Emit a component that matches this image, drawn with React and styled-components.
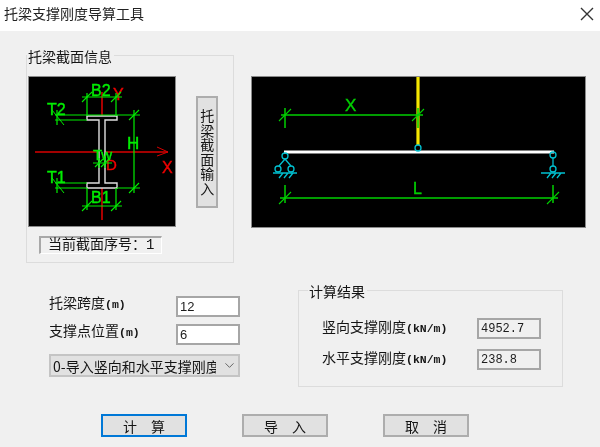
import React from "react";
import styled, { createGlobalStyle } from "styled-components";
import { ChevronDown } from "lucide-react";

const Global = createGlobalStyle`
  html, body { margin: 0; padding: 0; background: #f0f0f0; }
  * { box-sizing: border-box; }
`;

const cjk = `"Noto Sans CJK SC", "Liberation Sans", sans-serif`;
const monoCjk = `"Liberation Mono", "Noto Sans CJK SC", monospace`;

const Window = styled.div`
  width: 600px;
  height: 447px;
  overflow: hidden;
  background: #f0f0f0;
  color: #141414;
  font-family: ${cjk};
  font-size: 14px;
  line-height: 18px;
  filter: blur(0.3px);
`;
const TitleBar = styled.header`
  height: 31px;
  background: #fff;
  display: flex;
  align-items: center;
  justify-content: space-between;
  padding: 0 6px 5px 4px;
  color: #222;
`;
const CloseIcon = styled.svg`
  width: 14px;
  height: 14px;
  margin-top: 2px;
  stroke: #333;
  stroke-width: 1.4;
`;
const Body = styled.main`
  padding: 24px 14px 0 26px;
`;
const TopRow = styled.section`
  display: flex;
  gap: 17px;
  height: 208px;
`;
const Group = styled.div`
  position: relative;
  flex: none;
  border: 1px solid #dcdcdc;
  width: ${(p) => p.$w}px;
  height: ${(p) => p.$h}px;
`;
const Legend = styled.span`
  position: absolute;
  top: -9px;
  left: ${(p) => p.$x}px;
  padding: 0 2px 0 1px;
  background: #f0f0f0;
  white-space: nowrap;
`;
const SectionLayout = styled.div`
  display: grid;
  grid-template-columns: 148px 22px;
  column-gap: 20px;
  padding: 20px 0 0 1px;
  align-items: start;
`;
const CadPanel = styled.div`
  background: #000;
  border: 1px solid #8a8a8a;
  height: ${(p) => p.$h}px;
  width: ${(p) => p.$w}px;
  margin-top: ${(p) => p.$top || 0}px;
  flex: none;
  overflow: hidden;
`;
const CadSvg = styled.svg`
  display: block;
  width: 100%;
  height: 100%;
`;
const VerticalButton = styled.button`
  margin-top: 20px;
  width: 22px;
  height: 112px;
  padding: 0;
  border: 2px solid #adadad;
  background: #e1e1e1;
  color: #141414;
  font: inherit;
  line-height: 14.5px;
  writing-mode: vertical-rl;
  text-orientation: upright;
  letter-spacing: 0.5px;
  display: flex;
  align-items: center;
  justify-content: center;
`;
const SectionNo = styled.div`
  margin: 9px 0 0 12px;
  width: 123px;
  height: 18px;
  border-style: solid;
  border-width: 2px 1px 1px 2px;
  border-color: #a8a8a8 #fff #fff #a8a8a8;
  padding-left: 7px;
  line-height: 15px;
  white-space: nowrap;
  font-family: ${monoCjk};
`;
const Unit = styled.span`
  font-family: "Liberation Mono", monospace;
  font-size: 11.5px;
  font-weight: 700;
`;
const BottomRow = styled.section`
  display: flex;
  margin-top: 27px;
  height: 97px;
`;
const ParamColumn = styled.div`
  flex: none;
  width: 272px;
  padding: 6px 0 0 23px;
`;
const ParamGrid = styled.div`
  display: grid;
  grid-template-columns: 127px 64px;
  row-gap: 7px;
`;
const ParamLabel = styled.label`
  margin-top: -3px;
  white-space: nowrap;
`;
const TextInput = styled.input`
  width: 64px;
  height: 21px;
  border: 2px solid #a6a6a6;
  background: ${(p) => (p.readOnly ? "#f0f0f0" : "#fff")};
  padding: 0 2px;
  font-family: ${(p) => (p.readOnly ? `"Liberation Mono", monospace` : `"Liberation Sans", sans-serif`)};
  font-size: ${(p) => (p.readOnly ? 12 : 13)}px;
  color: #1c1c1c;
  outline: none;
`;
const SelectWrap = styled.div`
  position: relative;
  width: 191px;
  height: 23px;
  margin-top: 9px;
  svg {
    position: absolute;
    right: 3px;
    top: 4px;
    color: #555;
    pointer-events: none;
  }
`;
const Select = styled.select`
  appearance: none;
  width: 100%;
  height: 100%;
  border: 2px solid #c4c4c4;
  background: #e1e1e1;
  padding: 0 22px 0 2px;
  font: inherit;
  color: #141414;
  outline: none;
`;
const ResultRows = styled.div`
  display: grid;
  grid-template-columns: 155px 64px;
  row-gap: 10px;
  padding: 27px 0 0 23px;
  align-items: center;
`;
const ResultLabel = styled.label`
  white-space: nowrap;
  margin-top: -2px;
`;
const ButtonRow = styled.footer`
  display: flex;
  margin-top: 27px;
  padding-left: 75px;
  gap: 55px;
`;
const ActionButton = styled.button`
  width: 86px;
  height: 23px;
  padding: 0;
  background: #e1e1e1;
  border: 2px solid ${(p) => (p.$primary ? "#0078d7" : "#adadad")};
  color: #141414;
  font: inherit;
`;

const G = "#00ee00";
const G2 = "#00d000";
const R = "#f00000";
const C = "#00c0d0";

const Tick = ({ x, y, c = G, s = 6 }) => (
  <line x1={x - s} y1={y + s} x2={x + s} y2={y - s} stroke={c} strokeWidth="1.1" />
);
const CadText = styled.text`
  font-family: "Liberation Sans", sans-serif;
  font-size: ${(p) => p.$s}px;
  stroke: ${(p) => p.fill};
  stroke-width: 0.4px;
`;

const SectionDrawing = () => (
  <CadSvg viewBox="29 77 146 149">
    <line x1="102" y1="92" x2="102" y2="220" stroke="#d80000" strokeWidth="1.6" />
    <line x1="35" y1="152" x2="168" y2="152" stroke="#d80000" strokeWidth="1.6" />
    <polyline points="157,147 168,152 157,156" fill="none" stroke="#d80000" strokeWidth="1" />
    <CadText $s={16} x="162" y="173" fill={R}>X</CadText>
    <CadText $s={16} x="113" y="100" fill={R}>Y</CadText>
    <CadText $s={15} x="106" y="170" fill={R}>D</CadText>
    <path d="M87 116H117V120H105V183H117V188H87V183H99V120H87Z" fill="#000" stroke="#e0e0e0" strokeWidth="1.4" />
    <g stroke={G} strokeWidth="1.2" fill="none">
      <path d="M82 97H122M87 93V116M116 93V116" />
      <path d="M55 115H140M55 120H87M57 110V125" />
      <path d="M134 110V193M117 188H140" />
      <path d="M55 183H87M55 188H87M57 178V193" />
      <path d="M82 206H122M87 188V210M116 188V210" />
      <path d="M93 163H112M99 158V168M105 158V168" />
    </g>
    <Tick x={87} y={97} s={5} /><Tick x={116} y={97} s={5} />
    <Tick x={134} y={115} s={5} /><Tick x={134} y={188} s={5} />
    <Tick x={87} y={206} s={5} /><Tick x={116} y={206} s={5} />
    <Tick x={99} y={163} s={4} /><Tick x={105} y={163} s={4} />
    <path d="M52 110L64 125M52 178L64 193" stroke={G} />
    <CadText $s={16} x="91" y="96" fill={G}>B2</CadText>
    <CadText $s={16} x="47" y="115" fill={G}>T2</CadText>
    <CadText $s={17} x="127" y="149" fill={G}>H</CadText>
    <CadText $s={15} x="93" y="160" fill={G}>Tw</CadText>
    <CadText $s={16} x="47" y="183" fill={G}>T1</CadText>
    <CadText $s={16} x="91" y="203" fill={G}>B1</CadText>
  </CadSvg>
);

const BeamDrawing = () => (
  <CadSvg viewBox="252 77 333 150">
    <line x1="418" y1="76" x2="418" y2="145" stroke="#f5e600" strokeWidth="3.2" />
    <g stroke={G2} strokeWidth="1.5" fill="none">
      <path d="M281 115H423M285 108V128M418 108V128" />
      <path d="M280 198H558M285 185V203M553 185V203" />
    </g>
    <Tick x={285} y={115} c={G2} /><Tick x={418} y={115} c={G2} />
    <Tick x={285} y={198} c={G2} /><Tick x={553} y={198} c={G2} />
    <CadText $s={17} x="345" y="111" fill={G2}>X</CadText>
    <CadText $s={16} x="413" y="194" fill={G2}>L</CadText>
    <line x1="284" y1="152" x2="554" y2="152" stroke="#fff" strokeWidth="3" />
    <g stroke={C} strokeWidth="1.3" fill="none">
      <circle cx="418" cy="148" r="3" fill="#000" />
      <circle cx="285" cy="156" r="3" />
      <path d="M285 159L279 166M285 159L291 166" />
      <circle cx="278" cy="169" r="3" />
      <circle cx="291" cy="169" r="3" />
      <path d="M273 173H297M279 178L283 173M284 178L288 173M289 178L293 173" />
      <circle cx="553" cy="155" r="3" />
      <path d="M553 158V166" />
      <circle cx="553" cy="169" r="3" />
      <path d="M541 173H565M547 178L551 173M552 178L556 173M557 178L561 173" />
    </g>
  </CadSvg>
);

export default function App() {
  return (
    <Window>
      <Global />
      <TitleBar>
        <span>托梁支撑刚度导算工具</span>
        <CloseIcon viewBox="0 0 14 14">
          <path d="M1 1L13 13M13 1L1 13" />
        </CloseIcon>
      </TitleBar>
      <Body>
        <TopRow>
          <Group $w={208} $h={208}>
            <Legend $x={0}>托梁截面信息</Legend>
            <SectionLayout>
              <CadPanel $w={148} $h={151}>
                <SectionDrawing />
              </CadPanel>
              <VerticalButton>托梁截面输入</VerticalButton>
            </SectionLayout>
            <SectionNo>当前截面序号：1</SectionNo>
          </Group>
          <CadPanel $w={335} $h={152} $top={21}>
            <BeamDrawing />
          </CadPanel>
        </TopRow>
        <BottomRow>
          <ParamColumn>
            <ParamGrid>
              <ParamLabel>托梁跨度<Unit>(m)</Unit></ParamLabel>
              <TextInput defaultValue="12" />
              <ParamLabel>支撑点位置<Unit>(m)</Unit></ParamLabel>
              <TextInput defaultValue="6" />
            </ParamGrid>
            <SelectWrap>
              <Select defaultValue="0">
                <option value="0">0-导入竖向和水平支撑刚度</option>
              </Select>
              <ChevronDown size={15} strokeWidth={1.4} />
            </SelectWrap>
          </ParamColumn>
          <Group $w={265} $h={97}>
            <Legend $x={9}>计算结果</Legend>
            <ResultRows>
              <ResultLabel>竖向支撑刚度<Unit>(kN/m)</Unit></ResultLabel>
              <TextInput readOnly value="4952.7" />
              <ResultLabel>水平支撑刚度<Unit>(kN/m)</Unit></ResultLabel>
              <TextInput readOnly value="238.8" />
            </ResultRows>
          </Group>
        </BottomRow>
        <ButtonRow>
          <ActionButton $primary>计　算</ActionButton>
          <ActionButton>导　入</ActionButton>
          <ActionButton>取　消</ActionButton>
        </ButtonRow>
      </Body>
    </Window>
  );
}
